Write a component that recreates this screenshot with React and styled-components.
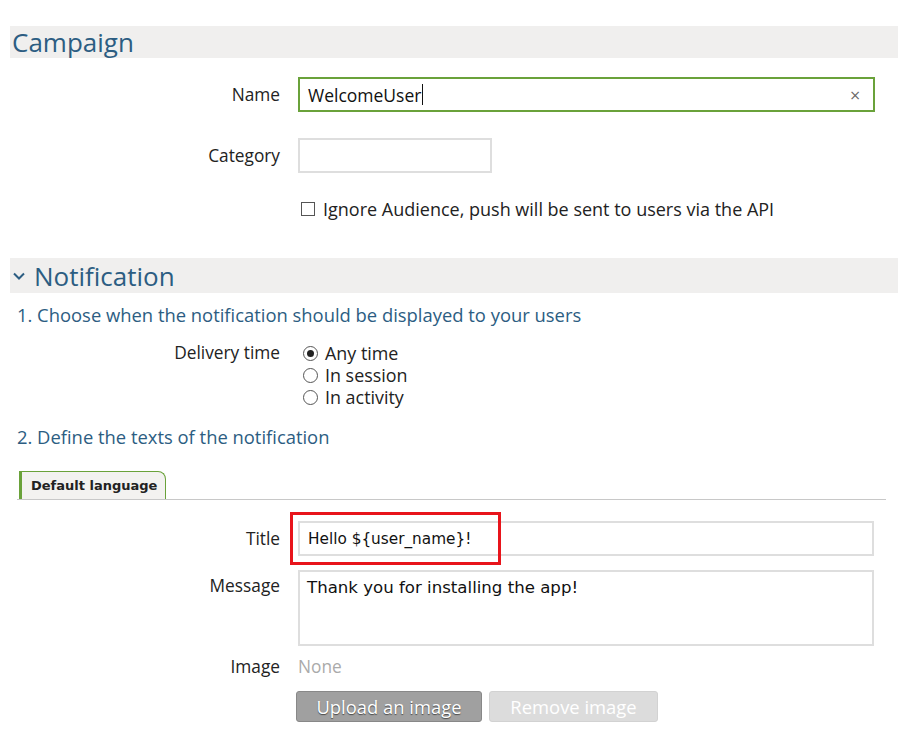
import React from 'react';
import styled, { createGlobalStyle } from 'styled-components';

const GlobalStyle = createGlobalStyle`
  body {
    margin: 0;
    background: #fff;
    font-family: 'Open Sans', 'Noto Sans', sans-serif;
    color: #222;
    line-height: 22px;
  }
`;

const Page = styled.div`
  width: 888px;
  padding: 26px 0 0 10px;
`;

const SectionHeader = styled.div`
  display: flex;
  align-items: center;
  gap: 8px;
  background: #f0efee;
  height: ${(p) => p.height || 33}px;
  margin-top: ${(p) => p.top || 0}px;
  padding-left: 2px;
  color: #2c5d82;
  font-size: 26px;
  line-height: 1;
`;

const Chevron = styled.svg`
  width: 14px;
  height: 10px;
`;

const Row = styled.div`
  display: grid;
  grid-template-columns: 270px 1fr;
  column-gap: 18px;
  align-items: ${(p) => p.align || 'center'};
  margin-top: ${(p) => p.top || 0}px;
`;

const Label = styled.div`
  text-align: right;
  font-size: 17.3px;
  color: #222;
  padding-top: ${(p) => p.pad || 0}px;
`;

const TextField = styled.div`
  display: flex;
  align-items: center;
  box-sizing: border-box;
  width: ${(p) => p.width || 576}px;
  height: ${(p) => p.height || 35}px;
  border: ${(p) => (p.focused ? '2px solid #6aa23a' : '2px solid #dedede')};
  padding: 0 8px;
  font-size: 17.5px;
  color: #111;
  background: #fff;
`;

const Caret = styled.span`
  display: inline-block;
  width: 1px;
  height: 21px;
  background: #111;
  margin-left: 1px;
`;

const Clear = styled.span`
  margin-left: auto;
  margin-right: 4px;
  color: #666;
  font-size: 14px;
  font-family: 'DejaVu Sans', sans-serif;
`;

const CheckRow = styled.label`
  display: flex;
  align-items: center;
  gap: 8px;
  margin-left: 3px;
  font-size: 18px;
  height: 22px;
`;

const Box = styled.span`
  display: inline-block;
  box-sizing: border-box;
  width: 14px;
  height: 14px;
  border: 1px solid #555;
`;

const SubHeading = styled.div`
  color: #2c5d82;
  font-size: 18.4px;
  padding-left: 7px;
  margin-top: ${(p) => p.top || 0}px;
`;

const RadioList = styled.div`
  display: flex;
  flex-direction: column;
  padding-left: 5px;
`;

const RadioItem = styled.div`
  display: flex;
  align-items: center;
  gap: 7px;
  height: 22px;
  font-size: 17.9px;
`;

const Radio = styled.span`
  box-sizing: border-box;
  width: 15px;
  height: 15px;
  border-radius: 50%;
  border: 1px solid #555;
  display: flex;
  align-items: center;
  justify-content: center;
  &::after {
    content: '';
    display: ${(p) => (p.checked ? 'block' : 'none')};
    width: 7px;
    height: 7px;
    border-radius: 50%;
    background: #222;
  }
`;

const Tabs = styled.div`
  margin: 23px 0 0 7px;
  width: 869px;
  border-bottom: 1px solid #c8c8c8;
  display: flex;
`;

const Tab = styled.div`
  box-sizing: border-box;
  margin-left: 2px;
  height: 28px;
  padding: 0 0 0 9px;
  width: 147px;
  display: flex;
  align-items: center;
  background: #f3f2f0;
  border: 1px solid #6aa23a;
  border-left: 3px solid #6aa23a;
  border-bottom: none;
  border-top-right-radius: 8px;
  font-family: 'DejaVu Sans', sans-serif;
  font-weight: bold;
  font-size: 13px;
  color: #222;
`;

const FieldWrap = styled.div`
  position: relative;
`;

const Highlight = styled.div`
  position: absolute;
  left: -8px;
  top: -9px;
  width: 211px;
  height: 53px;
  box-sizing: border-box;
  border: 3px solid #e8141b;
  pointer-events: none;
`;

const PlainValue = styled.span`
  font-family: 'DejaVu Sans', sans-serif;
  font-size: 15.3px;
  color: #111;
`;

const TextArea = styled.div`
  box-sizing: border-box;
  width: 576px;
  height: 76px;
  border: 2px solid #dedede;
  padding: 5px 7px;
  font-family: 'DejaVu Sans', sans-serif;
  font-size: 16.6px;
  color: #111;
`;

const Muted = styled.div`
  color: #aaa;
  font-size: 17.3px;
`;

const Buttons = styled.div`
  display: flex;
  gap: 7px;
  margin-top: 13px;
  margin-left: -2px;
`;

const Button = styled.div`
  box-sizing: border-box;
  height: 31px;
  width: ${(p) => p.width}px;
  display: flex;
  align-items: center;
  justify-content: center;
  border-radius: 3px;
  font-size: 18.4px;
  color: #fff;
  background: ${(p) => (p.disabled ? '#dcdcdc' : '#a0a0a0')};
  border: 1px solid ${(p) => (p.disabled ? '#d2d2d2' : '#888')};
  text-shadow: ${(p) => (p.disabled ? 'none' : '0 1px 1px rgba(0,0,0,0.55)')};
`;

export default function App() {
  return (
    <Page>
      <GlobalStyle />
      <SectionHeader height={32}>Campaign</SectionHeader>

      <Row top={19}>
        <Label>Name</Label>
        <TextField focused width={577}>
          WelcomeUser
          <Caret />
          <Clear>×</Clear>
        </TextField>
      </Row>

      <Row top={26}>
        <Label>Category</Label>
        <TextField width={194} />
      </Row>

      <Row top={25}>
        <div />
        <CheckRow>
          <Box />
          Ignore Audience, push will be sent to users via the API
        </CheckRow>
      </Row>

      <SectionHeader height={35} top={38}>
        <Chevron viewBox="0 0 14 10">
          <path d="M2 2.5 L7 7.5 L12 2.5" fill="none" stroke="#2c5d82" strokeWidth="2" />
        </Chevron>
        Notification
      </SectionHeader>

      <SubHeading top={11}>1. Choose when the notification should be displayed to your users</SubHeading>

      <Row top={16} align="start">
        <Label>Delivery time</Label>
        <RadioList>
          <RadioItem>
            <Radio checked /> Any time
          </RadioItem>
          <RadioItem>
            <Radio /> In session
          </RadioItem>
          <RadioItem>
            <Radio /> In activity
          </RadioItem>
        </RadioList>
      </Row>

      <SubHeading top={18}>2. Define the texts of the notification</SubHeading>

      <Tabs>
        <Tab>Default language</Tab>
      </Tabs>

      <Row top={21}>
        <Label>Title</Label>
        <FieldWrap>
          <TextField>
            <PlainValue>Hello ${'{'}user_name{'}'}!</PlainValue>
          </TextField>
          <Highlight />
        </FieldWrap>
      </Row>

      <Row top={14} align="start">
        <Label pad={5}>Message</Label>
        <TextArea>Thank you for installing the app!</TextArea>
      </Row>

      <Row top={10}>
        <Label>Image</Label>
        <Muted>None</Muted>
      </Row>

      <Row>
        <div />
        <Buttons>
          <Button width={186}>Upload an image</Button>
          <Button width={169} disabled>
            Remove image
          </Button>
        </Buttons>
      </Row>
    </Page>
  );
}
